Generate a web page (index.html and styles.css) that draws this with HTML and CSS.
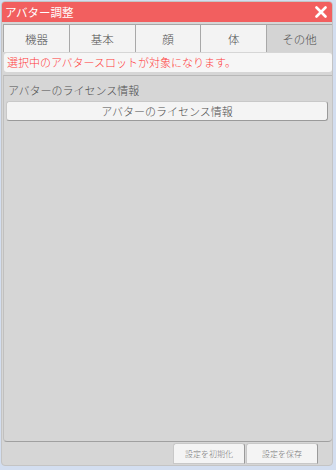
FILE: index.html
```html
<!DOCTYPE html>
<html lang="ja">
<head>
  <meta charset="UTF-8" />
  <meta name="viewport" content="width=device-width, initial-scale=1.0" />
  <title>アバター調整</title>
  <link rel="stylesheet" href="styles.css">
</head>
<body>
  <div class="window">
    <header class="titlebar">
      <span class="title">アバター調整</span>
      <span class="close">
        <svg width="12" height="12" viewBox="0 0 12 12">
          <path d="M1.5 1.5 L10.5 10.5 M10.5 1.5 L1.5 10.5" stroke="#fff" stroke-width="2.6" stroke-linecap="round" />
        </svg>
      </span>
    </header>
    <nav class="tabs">
      <div class="tab">機器</div>
      <div class="tab">基本</div>
      <div class="tab">顔</div>
      <div class="tab">体</div>
      <div class="tab active">その他</div>
    </nav>
    <div class="notice">選択中のアバタースロットが対象になります。</div>
    <section class="panel">
      <div class="label">アバターのライセンス情報</div>
      <button class="wide-btn">アバターのライセンス情報</button>
    </section>
    <footer class="actions">
      <button class="small-btn">設定を初期化</button>
      <button class="small-btn">設定を保存</button>
    </footer>
  </div>
</body>
</html>
```

FILE: styles.css
```css
body {
  margin: 0;
  background-color: #d3def0;
  font-family: 'Noto Sans CJK JP', 'Noto Sans', sans-serif;
  font-weight: 300;
  width: 336px;
  height: 470px;
  overflow: hidden;
}
.window {
  margin: 1px 0 0 1px;
  width: 330px;
  height: 463px;
  background-color: #d6d6d6;
  border: 1px solid #c4c4c4;
  border-radius: 4px;
  display: flex;
  flex-direction: column;
  overflow: hidden;
}
.titlebar {
  height: 20px;
  background-color: #f25f5f;
  display: flex;
  align-items: center;
  justify-content: space-between;
  padding: 0 5px 0 3px;
}
.title {
  color: white;
  font-size: 11.5px;
  font-weight: 400;
  line-height: 20px;
}
.close {
  display: flex;
  align-items: center;
}
.tabs {
  display: flex;
  margin: 2px 0 0 1px;
  height: 28px;
}
.tab {
  flex: 1;
  background-color: #f3f3f3;
  border: 1px solid #a8a8a8;
  border-bottom: none;
  margin-right: -1px;
  display: flex;
  align-items: center;
  justify-content: center;
  font-size: 11.5px;
  color: #4f4f4f;
}
.tab.active {
  background-color: #d4d4d4;
}
.notice {
  margin: 1px 0 0 2px;
  height: 19px;
  background-color: #f6f6f6;
  border-radius: 3px;
  color: #ff3b3b;
  font-size: 11px;
  line-height: 19px;
  padding-left: 3px;
}
.panel {
  flex: 1;
  margin: 3px 0 0 1px;
  border-top: 1px solid #b8b8b8;
  border-bottom: 1px solid #a0a0a0;
  border-left: 1px solid #c0c0c0;
  border-radius: 0 0 4px 4px;
  padding: 5px 4px 0 2px;
}
.label {
  font-size: 11px;
  color: #4f4f4f;
  line-height: 18px;
  padding-left: 2px;
}
.wide-btn {
  display: block;
  width: 100%;
  height: 20px;
  margin-top: 2px;
  background-color: #f4f4f4;
  border: 1px solid #c8c8c8;
  border-right-color: #9a9a9a;
  border-bottom-color: #9a9a9a;
  border-radius: 3px;
  font-family: inherit;
  font-weight: 300;
  font-size: 11px;
  color: #4f4f4f;
  padding: 0;
  line-height: 18px;
}
.actions {
  height: 22px;
  display: flex;
  justify-content: flex-end;
  gap: 1px;
  padding: 1px 14px 0 0;
}
.small-btn {
  width: 72px;
  height: 21px;
  background-color: #f4f4f4;
  border: 1px solid #c8c8c8;
  border-right-color: #9a9a9a;
  border-radius: 3px 3px 0 0;
  font-family: inherit;
  font-weight: 300;
  font-size: 8px;
  color: #777;
  padding: 0;
}
```
